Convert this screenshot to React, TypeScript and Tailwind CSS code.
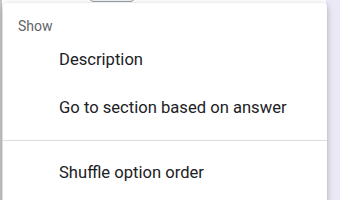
export default function App() {
  const items = ['Description', 'Go to section based on answer'];
  return (
    <div className="relative w-[340px] h-[200px] overflow-hidden bg-[#ece9f6] font-['Roboto',sans-serif]">
      {/* page underneath the menu */}
      <div className="absolute left-0 top-0 w-[326px] h-[200px] bg-white border-l-2 border-[#c7c7cc]" />
      <div className="absolute left-[88px] -top-[20px] w-[48px] h-[22px] rounded-md border border-[#9aa0a6] bg-[#f1f3f4]" />

      {/* menu */}
      <div className="absolute left-[3px] top-[3px] w-[324px] h-[210px] bg-white rounded shadow-[0_2px_4px_rgba(0,0,0,0.2),0_1px_10px_rgba(0,0,0,0.12)] pt-[13px]">
        <div className="h-5 px-[15px] text-[14px] leading-5 text-[#5f6368]">Show</div>
        {items.map(t => (
          <div key={t} className="h-12 flex items-center pt-px pl-[56px] text-[16.6px] text-[#202124]">{t}</div>
        ))}
        <div className="my-2 border-t border-[#dadce0]" />
        <div className="h-12 flex items-center pt-px pl-[56px] text-[16.6px] text-[#202124]">Shuffle option order</div>
      </div>
    </div>
  );
}
